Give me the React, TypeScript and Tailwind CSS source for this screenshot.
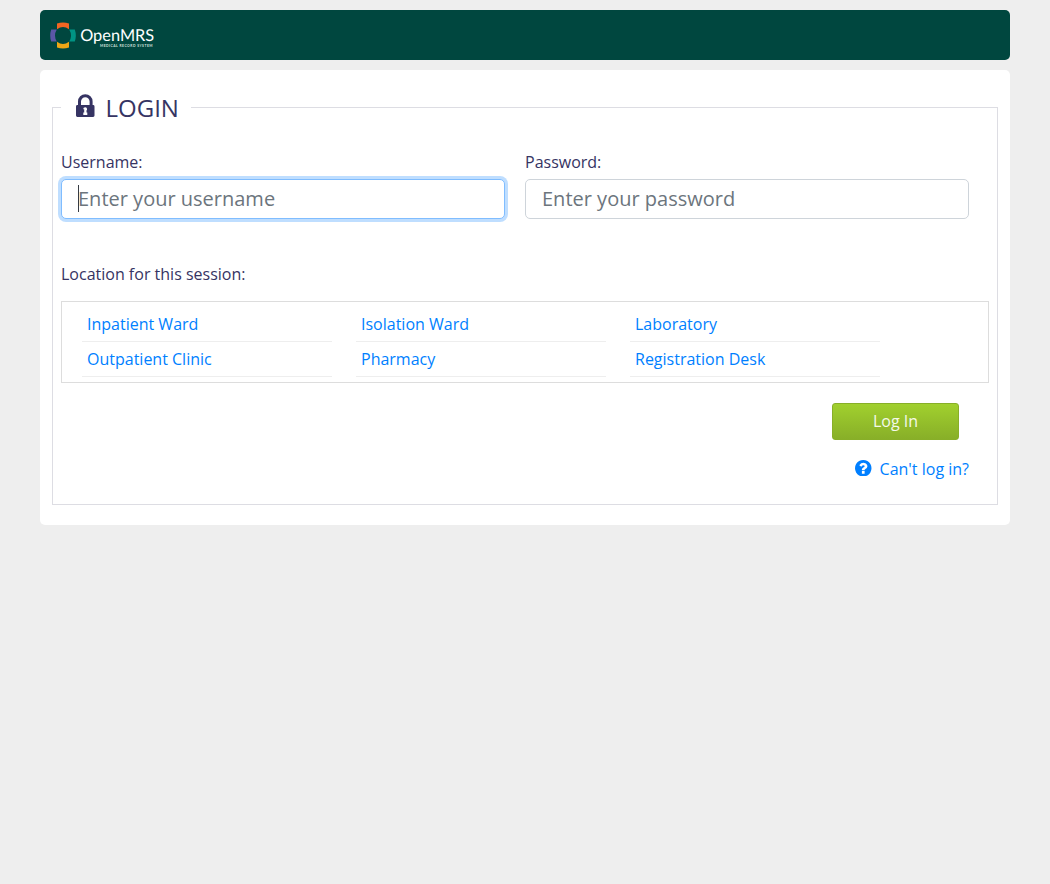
import React from "react";

const locations = [
  "Inpatient Ward",
  "Isolation Ward",
  "Laboratory",
  "Outpatient Clinic",
  "Pharmacy",
  "Registration Desk",
];

function Logo() {
  return (
    <svg width="106" height="30" viewBox="0 0 106 30" role="img" aria-label="OpenMRS">
      <path d="M7 3.6Q13 1.400 19 3.600V9.200Q13 4.800 7 9.200Z" fill="#f26522" />
      <path d="M7 27.400Q13 29.600 19 27.400V21.800Q13 26.200 7 21.800Z" fill="#eea616" />
      <path d="M1.200 9.500Q-.8 15.500 1.200 21.500H6.800Q3.200 15.500 6.800 9.500Z" fill="#5b57a6" />
      <path d="M24.800 9.500Q26.800 15.500 24.800 21.500H19.200Q22.800 15.500 19.200 9.500Z" fill="#009384" />
      <text x="30.2" y="21.4" textLength="74" lengthAdjust="spacingAndGlyphs" fill="#fff" className="font-['Lato',sans-serif] text-[16.4px] [text-rendering:geometricPrecision]">
        OpenMRS
      </text>
      <text x="50" y="27.300" textLength="52.500" lengthAdjust="spacing" fill="#d5e2df" className="font-['Lato',sans-serif] text-[3.4px] font-bold">
        MEDICAL RECORD SYSTEM
      </text>
    </svg>
  );
}

function LockIcon() {
  return (
    <svg width="19" height="24" viewBox="0 0 19 24" fill="#363463" aria-hidden="true">
      <path
        fillRule="evenodd"
        d="M2 11V7.500a7.300 7.300 0 0 1 14.600 0V11h.5q1.400 0 1.400 1.400v9.200q0 1.400-1.400 1.400H1.400Q0 23 0 21.600v-9.200Q0 11 1.400 11ZM5 11h8.600V7.600a4.300 4.300 0 0 0-8.600 0ZM9.200 13.200a2 2 0 0 0-2 2h1v3.300H7.300V21h4v-2.500h-.8V16.600a2 2 0 0 0-1.300-3.400Z"
      />
    </svg>
  );
}

function HelpIcon() {
  return (
    <svg className="mt-[2.500px] size-[16.5px]" viewBox="128 128 1536 1536" fill="currentColor" aria-hidden="true">
      <path d="M1024 1376v-192q0-14-9-23t-23-9h-192q-14 0-23 9t-9 23v192q0 14 9 23t23 9h192q14 0 23-9t9-23zm256-672q0-88-55.500-163t-138.500-116-170-41q-243 0-371 213-15 24 8 42l132 100q7 6 19 6 16 0 25-12 53-68 86-92 34-24 86-24 48 0 85.500 26t37.500 59q0 38-20 61t-68 45q-63 28-115.500 86.500t-52.500 125.500v36q0 14 9 23t23 9h192q14 0 23-9t9-23q0-19 21.500-49.500t54.500-49.500q32-18 49-28.500t46-35 44.500-48 28-60.500 12.500-81zm384 192q0 209-103 385.500t-279.500 279.500-385.500 103-385.500-103-279.500-279.500-103-385.500 103-385.500 279.500-279.500 385.500-103 385.500 103 279.500 279.500 103 385.500z" />
    </svg>
  );
}

export default function App() {
  return (
    <div className="min-h-screen bg-[#eeeeee] px-10 pt-2.5 font-['Open_Sans',sans-serif] text-base text-[#363463]">
      <header className="flex h-[50px] items-start rounded-[5px] bg-[#00473f] pt-2.5 pl-2.5">
        <Logo />
      </header>
      <main className="mt-2.5 h-[455px] rounded-[5px] bg-white px-3 pt-[19px]">
        <fieldset className="h-[416px] min-w-0 border border-[#dddde3] px-2">
          <legend className="flex h-9 w-[130px] items-start pl-[15px]">
            <span className="mt-[5px] flex"><LockIcon /></span>
            <h2 className="ml-[10.5px] text-2xl leading-[37px]">LOGIN</h2>
          </legend>
          <div className="mt-[25px] flex gap-5">
            <div className="w-[444px]">
              <label htmlFor="username" className="block h-[29px] leading-6">Username:</label>
              <div className="relative">
                <input
                  id="username"
                  placeholder="Enter your username"
                  className="block h-10 w-full rounded-[5px] border border-[#80bdff] bg-white px-4 pb-0.5 text-xl shadow-[0_0_0_3px_#bfdeff] outline-none placeholder:text-[#6c757d]"
                />
                <span className="absolute top-1.5 left-[17px] h-[27px] w-px bg-[#363b43]" />
              </div>
            </div>
            <div className="w-[444px]">
              <label htmlFor="password" className="block h-[29px] leading-6">Password:</label>
              <input
                id="password"
                type="password"
                placeholder="Enter your password"
                className="block h-10 w-full rounded-[5px] border border-[#ced4da] bg-white px-4 pb-0.5 text-xl outline-none placeholder:text-[#6c757d]"
              />
            </div>
          </div>
          <p className="mt-[43px] leading-6">Location for this session:</p>
          <ul className="mt-[15px] grid h-[82px] grid-cols-[250px_250px_250px] grid-rows-[35px_35px] gap-x-6 border border-[#dddddd] pt-[5px] pl-5 text-[#007fff]">
            {locations.map((name) => (
              <li key={name} className="border-b border-[#eeeeee] pt-[5px] pl-[5px] leading-6">
                {name}
              </li>
            ))}
          </ul>
          <div className="mt-5 mr-[30px] flex justify-end">
            <button className="h-[37px] w-[127px] rounded-[3px] border border-[#88af28] bg-linear-to-b from-[#a1d02e] to-[#88af28] pb-0.5 text-[#f5f9e9]">
              Log In
            </button>
          </div>
          <div className="mt-[17px] mr-5 flex justify-end">
            <a href="#" className="flex items-start gap-2 leading-6 text-[#007fff]">
              <HelpIcon />
              Can't log in?
            </a>
          </div>
        </fieldset>
      </main>
    </div>
  );
}
